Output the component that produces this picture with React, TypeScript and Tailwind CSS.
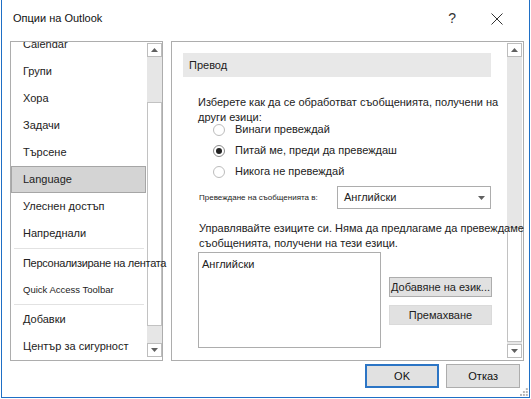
const font = "font-['Liberation_Sans',Arial,sans-serif]";

function Arrow({ up }: { up: boolean }) {
  return (
    <div className="flex h-[14px] w-[15px] items-center justify-center border border-[#bdbdbd] bg-white">
      <svg width="7" height="4" viewBox="0 0 7 4">
        {up ? <path d="M0 4 L3.5 0 L7 4 Z" fill="#606060" /> : <path d="M0 0 L3.5 4 L7 0 Z" fill="#606060" />}
      </svg>
    </div>
  );
}

function ScrollBar({ before, thumb, after }: { before: number; thumb: number; after: number }) {
  return (
    <div className="flex w-[15px] shrink-0 flex-col pt-[1px]">
      <Arrow up />
      <div className="bg-[#e6e6e6]" style={{ height: before }} />
      <div className="border border-[#c2c2c2] bg-white" style={{ height: thumb }} />
      <div className="bg-[#e6e6e6]" style={{ height: after }} />
      <Arrow up={false} />
    </div>
  );
}

function NavItem({ label, selected, small, tight }: { label: string; selected?: boolean; small?: boolean; tight?: boolean }) {
  return (
    <div
      className={
        selected
          ? "mr-[1px] flex h-[27px] items-center border border-[#a6a6a6] bg-[#d4d4d4] pl-[11px] text-[11px] text-[#222]"
          : small
          ? "flex h-[26px] items-center pl-[12px] text-[9.5px] text-[#222]"
          : "flex h-[27px] items-center pl-[12px] text-[11px] text-[#222]"
      }
    >
      <span className={tight ? "whitespace-nowrap tracking-[-0.3px]" : "whitespace-nowrap"}>{label}</span>
    </div>
  );
}

function Separator() {
  return (
    <div className="flex h-[3px] items-center px-[3px]">
      <div className="h-[1px] w-full bg-[#e2e2e2]" />
    </div>
  );
}

function Radio({ label, checked }: { label: string; checked?: boolean }) {
  return (
    <div className="flex h-[21px] items-center pl-[15px]">
      <div
        className={
          checked
            ? "flex h-[12px] w-[12px] items-center justify-center rounded-full border border-[#8a8a8a] bg-white"
            : "flex h-[12px] w-[12px] items-center justify-center rounded-full border border-[#bcbcbc] bg-white"
        }
      >
        {checked && <div className="h-[6px] w-[6px] rounded-full bg-[#222]" />}
      </div>
      <span className="ml-[10px] text-[11px] text-[#222]">{label}</span>
    </div>
  );
}

export default function App() {
  return (
    <div className={`${font} h-[399px] w-[531px] overflow-hidden bg-white pl-[1px] pr-[1px] pb-[1px]`}>
      <div className="flex h-full flex-col border-x border-b border-[#1f6fc5] bg-white">
        <div className="flex h-[41px] items-center pb-[4px]">
          <span className="ml-[11px] text-[11px] text-[#111]">Опции на Outlook</span>
          <span className="ml-auto mr-[35px] text-[14px] font-light text-[#333]">?</span>
          <svg className="mr-[26px]" width="12" height="12" viewBox="0 0 12 12">
            <path d="M0.5 0.5 L11.5 11.5 M11.5 0.5 L0.5 11.5" stroke="#333" strokeWidth="1" />
          </svg>
        </div>

        <div className="flex h-[320px] pl-[8px]">
          <div className="flex w-[153px] shrink-0 border border-[#adadad]">
            <div className="relative z-10 min-w-0 flex-1 overflow-x-visible overflow-y-clip">
              <div className="-mt-[11px] flex flex-col">
                <NavItem label="Calendar" />
                <NavItem label="Групи" />
                <NavItem label="Хора" />
                <NavItem label="Задачи" />
                <NavItem label="Търсене" />
                <NavItem label="Language" selected />
                <NavItem label="Улеснен достъп" />
                <NavItem label="Напреднали" />
                <Separator />
                <NavItem label="Персонализиране на лентата" tight />
                <NavItem label="Quick Access Toolbar" small />
                <Separator />
                <NavItem label="Добавки" />
                <NavItem label="Център за сигурност" />
              </div>
            </div>
            <ScrollBar before={45} thumb={224} after={17} />
          </div>

          <div className="ml-[8px] flex w-[353px] shrink-0 border border-[#adadad]">
            <div className="relative z-10 flex min-w-0 flex-1 flex-col text-[#222]">
              <div className="ml-[11px] mt-[11px] flex h-[24px] w-[308px] items-center bg-[#e8e8e8] pl-[6px] text-[11px]">
                Превод
              </div>
              <div className="ml-[26px] mt-[18px] w-[310px] text-[11px] leading-[15px]">
                Изберете как да се обработват съобщенията, получени на други езици:
              </div>
              <div className="-mt-[6px] ml-[26px] flex flex-col">
                <Radio label="Винаги превеждай" />
                <Radio label="Питай ме, преди да превеждаш" checked />
                <Radio label="Никога не превеждай" />
              </div>
              <div className="ml-[27px] mt-[4px] flex h-[23px] items-center">
                <span className="w-[138px] text-[8px] text-[#222]">Превеждане на съобщенията в:</span>
                <div className="flex h-[23px] w-[154px] items-center border border-[#adadad] bg-white pl-[6px] pr-[5px] text-[11px]">
                  <span>Английски</span>
                  <svg className="ml-auto" width="7" height="4" viewBox="0 0 7 4">
                    <path d="M0 0 L3.5 4 L7 0 Z" fill="#606060" />
                  </svg>
                </div>
              </div>
              <div className="ml-[27px] mt-[12px] whitespace-nowrap text-[11px] leading-[15px]">
                Управлявайте езиците си. Няма да предлагаме да превеждаме
                <br />
                съобщенията, получени на тези езици.
              </div>
              <div className="ml-[26px] mt-[1px] flex">
                <div className="h-[96px] w-[183px] border border-[#adadad] bg-white pl-[3px] pt-[3px] text-[11px]">
                  Английски
                </div>
                <div className="ml-[8px] flex flex-col pt-[25px]">
                  <div className="flex h-[20px] w-[103px] items-center justify-center whitespace-nowrap border border-[#adadad] bg-[#e1e1e1] text-[11px]">
                    Добавяне на език...
                  </div>
                  <div className="mt-[8px] flex h-[20px] w-[103px] items-center justify-center border border-[#dadada] bg-[#e1e1e1] text-[11px]">
                    Премахване
                  </div>
                </div>
              </div>
            </div>
            <div className="mr-[1px]">
              <ScrollBar before={170} thumb={115} after={2} />
            </div>
          </div>
        </div>

        <div className="flex flex-1 items-start pt-[3px]">
          <div className="ml-[363px] flex h-[24px] w-[76px] items-center justify-center border-2 border-[#2c75c5] bg-[#e1e1e1] text-[11px] text-[#111]">
            OK
          </div>
          <div className="ml-[7px] flex h-[24px] w-[76px] items-center justify-center border border-[#adadad] bg-[#e1e1e1] text-[11px] text-[#111]">
            Отказ
          </div>
          <svg className="mb-[1px] ml-auto mr-[1px] self-end" width="8" height="8" viewBox="0 0 8 8">
            <rect x="6" y="0" width="2" height="2" fill="#b5b5b5" />
            <rect x="3" y="3" width="2" height="2" fill="#b5b5b5" />
            <rect x="6" y="3" width="2" height="2" fill="#b5b5b5" />
            <rect x="0" y="6" width="2" height="2" fill="#b5b5b5" />
            <rect x="3" y="6" width="2" height="2" fill="#b5b5b5" />
            <rect x="6" y="6" width="2" height="2" fill="#b5b5b5" />
          </svg>
        </div>
      </div>
    </div>
  );
}
